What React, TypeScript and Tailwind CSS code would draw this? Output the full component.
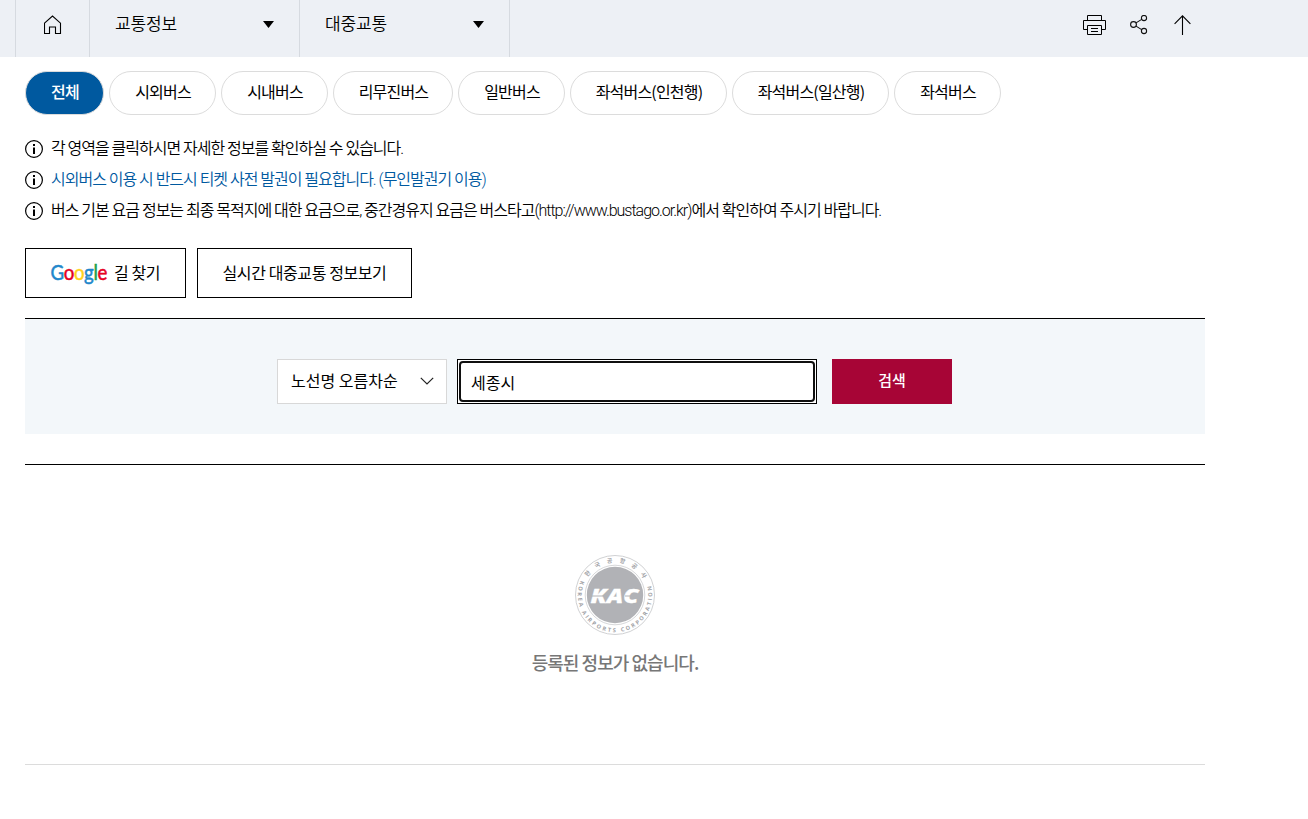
import { ChangeEvent, useState } from "react";

const busTypes = [
  { label: "전체", width: "w-[79px]" },
  { label: "시외버스", width: "w-[107px]" },
  { label: "시내버스", width: "w-[107px]" },
  { label: "리무진버스", width: "w-[120px]" },
  { label: "일반버스", width: "w-[107px]" },
  { label: "좌석버스(인천행)", width: "w-[157px]" },
  { label: "좌석버스(일산행)", width: "w-[157px]" },
  { label: "좌석버스", width: "w-[107px]" },
];

const notices = [
  { text: "각 영역을 클릭하시면 자세한 정보를 확인하실 수 있습니다.", color: "text-black" },
  { text: "시외버스 이용 시 반드시 티켓 사전 발권이 필요합니다. (무인발권기 이용)", color: "text-[#00599f]" },
  {
    text: "버스 기본 요금 정보는 최종 목적지에 대한 요금으로, 중간경유지 요금은 버스타고(http://www.bustago.or.kr)에서 확인하여 주시기 바랍니다.",
    color: "text-black",
  },
];

const HomeIcon = () => (
  <svg width="18" height="19" viewBox="0 0 18 19" fill="none" stroke="#000" strokeWidth="1.1">
    <path d="M.5 8.200 8.500 1l8 7.200V18.500H11.500V12H5.500v6.500H.5z" />
  </svg>
);

const PrintIcon = () => (
  <svg width="23" height="21" viewBox="0 0 23 21" fill="none" stroke="#000">
    <path d="M4.500 5.500v-5h14v5M4.500 14.500h-4v-9h22v9h-4" />
    <path d="M4.500 10.500h14v9h-14zM8 13.500h7M8 16.500h7" />
  </svg>
);

const ShareIcon = () => (
  <svg width="18" height="20" viewBox="0 0 18 20" fill="none" stroke="#111" strokeWidth="1.1">
    <circle cx="3.500" cy="9.500" r="2.900" />
    <circle cx="14" cy="3" r="2.600" />
    <circle cx="14" cy="16" r="2.600" />
    <path d="m6 7.900 5.700-3.500M6 11.100l5.700 3.500" />
  </svg>
);

const ArrowUpIcon = () => (
  <svg width="18" height="20" viewBox="0 0 18 20" fill="none" stroke="#000" strokeWidth="1.1">
    <path d="M8.500 20V.8M.6 8.800l7.900-8 7.900 8" />
  </svg>
);

const InfoIcon = () => (
  <svg width="18" height="18" viewBox="0 0 18 18" fill="none" className="shrink-0">
    <circle cx="9" cy="9" r="8.400" stroke="#000" strokeWidth="1.2" />
    <path d="M8 4h2v2H8zM8 7.500h2V14H8z" fill="#000" />
  </svg>
);

const GoogleLogo = () => (
  <svg
    width="57"
    height="32"
    viewBox="0 0 57 32"
    className="overflow-visible [font-family:Lato,sans-serif]"
    fontSize="20.500"
    fontWeight="400"
    aria-label="Google"
  >
    <text x="-.5" y="23" textLength="56.500" lengthAdjust="spacingAndGlyphs" strokeWidth=".5">
      <tspan fill="#2187cb" stroke="#2187cb">G</tspan>
      <tspan fill="#e60023" stroke="#e60023">o</tspan>
      <tspan fill="#ffd21c" stroke="#ffd21c">o</tspan>
      <tspan fill="#2187cb" stroke="#2187cb">g</tspan>
      <tspan fill="#17a04a" stroke="#17a04a">l</tspan>
      <tspan fill="#e60023" stroke="#e60023">e</tspan>
    </text>
  </svg>
);

const KacEmblem = () => (
  <svg width="80" height="80" viewBox="0 0 80 80" fill="none">
    <defs>
      <path id="emblem-top" d="M7.500 40a32.500 32.500 0 0 1 65 0" />
      <path id="emblem-bottom" d="M5.800 25.500A37.200 37.200 0 1 0 74.200 25.500" />
    </defs>
    <circle cx="40" cy="40" r="39.500" stroke="#c4c5c8" strokeWidth=".8" />
    <circle cx="40" cy="40" r="29.800" stroke="#c4c5c8" strokeWidth=".7" />
    <circle cx="40" cy="40" r="28.200" fill="#b1b2b6" />
    <text fill="#a2a3a7" fontSize="6" fontWeight="700" textAnchor="middle" letterSpacing="6.600">
      <textPath href="#emblem-top" startOffset="54%">한국공항공사</textPath>
    </text>
    <text fill="#a2a3a7" fontSize="5.600" fontWeight="700" className="[font-family:Open_Sans,sans-serif]">
      <textPath href="#emblem-bottom" startOffset="0" textLength="141">KOREA AIRPORTS CORPORATION</textPath>
    </text>
    <text
      x="15.500"
      y="47.800"
      fill="#fff"
      stroke="#fff"
      strokeWidth=".3"
      fontSize="20"
      fontWeight="800"
      fontStyle="italic"
      textLength="48"
      lengthAdjust="spacingAndGlyphs"
      className="[font-family:Open_Sans,sans-serif]"
    >
      KAC
    </text>
    <path d="M12 41h18M50 41h14" stroke="#b1b2b6" strokeWidth="1" />
  </svg>
);

const BreadcrumbMenu = ({ label }: { label: string }) => (
  <button className="flex h-full w-[210px] items-start justify-between border-r border-[#d6dae0] px-[25px] pt-[11px] text-left">
    <span className="text-[17px] leading-[24px] font-[350] tracking-[-0.1px]">{label}</span>
    <svg width="11" height="7" viewBox="0 0 11 7" className="mt-[10px]">
      <path d="M0 0h11L5.500 7z" />
    </svg>
  </button>
);

export default function App() {
  const [selected, setSelected] = useState("전체");
  const [keyword, setKeyword] = useState("세종시");

  return (
    <div className="h-[819px] overflow-hidden bg-white font-[Noto_Sans_CJK_KR,sans-serif] text-black">
      <header className="flex h-[57px] justify-between bg-[#edf0f5] pr-[116px] pl-[15px]">
        <nav className="flex">
          <button className="flex w-[75px] justify-center border-x border-[#d6dae0] pt-[15px]" aria-label="홈">
            <HomeIcon />
          </button>
          <BreadcrumbMenu label="교통정보" />
          <BreadcrumbMenu label="대중교통" />
        </nav>
        <div className="flex items-start pt-[15px]">
          <button aria-label="인쇄"><PrintIcon /></button>
          <button className="ml-[24px]" aria-label="공유"><ShareIcon /></button>
          <button className="ml-[26px]" aria-label="위로"><ArrowUpIcon /></button>
        </div>
      </header>

      <main className="ml-[25px] w-[1180px]">
        {/* Bus type filter */}
        <div className="flex gap-[5px] pt-[14px]">
          {busTypes.map((type) => (
            <button
              key={type.label}
              onClick={() => setSelected(type.label)}
              className={`h-[44px] shrink-0 rounded-full border border-[#dcdcdc] pb-[5px] pl-px text-[16px] whitespace-nowrap ${type.width} ${
                selected === type.label ? "bg-[#00599f] font-medium text-white" : "bg-white font-normal"
              }`}
            >
              <span className="tracking-[-0.8px]">{type.label}</span>
            </button>
          ))}
        </div>

        {/* Notices */}
        <ul className="mt-[18px]">
          {notices.map((notice) => (
            <li key={notice.text} className="flex h-[31px] items-center gap-2">
              <InfoIcon />
              <span
                className={`font-[Roboto,Noto_Sans_CJK_KR,sans-serif] text-[16px] font-[350] tracking-[-1.01px] whitespace-nowrap ${notice.color}`}
              >
                {notice.text}
              </span>
            </li>
          ))}
        </ul>

        {/* External links */}
        <div className="mt-[22px] flex gap-[11px]">
          <button className="flex h-[50px] w-[161px] items-center border border-black pl-[25px] text-[16px] tracking-[-0.4px]">
            <GoogleLogo />
            <span className="ml-[6px] pb-[3px] whitespace-nowrap">길 찾기</span>
          </button>
          <button className="h-[50px] w-[215px] border border-black pb-[3px] text-[16px] tracking-[-0.4px] whitespace-nowrap">
            실시간 대중교통 정보보기
          </button>
        </div>

        {/* Search */}
        <form
          onSubmit={(e) => e.preventDefault()}
          className="mt-5 flex h-[116px] items-start border-t border-black bg-[#f3f7fa] pt-10 pl-[252px]"
        >
          <button type="button" className="flex h-[45px] w-[170px] items-center justify-between border border-[#d8d8d8] bg-white pr-[12px] pl-[13px]">
            <span className="pb-[4px] text-[16px] whitespace-nowrap">노선명 오름차순</span>
            <svg width="14" height="8" viewBox="0 0 14 8" fill="none" stroke="#222" strokeWidth="1.2" className="-mt-px">
              <path d="m.8.800 6.200 6.200 6.200-6.200" />
            </svg>
          </button>
          <div className="ml-[10px] h-[45px] w-[360px] border border-black bg-white p-px">
            <input
              value={keyword}
              onChange={(e: ChangeEvent<HTMLInputElement>) => setKeyword(e.target.value)}
              className="h-full w-full rounded-[4px] border-2 border-[#101010] bg-white px-[10px] text-[16px] outline-none"
            />
          </div>
          <button className="ml-[15px] h-[45px] w-[120px] bg-[#a70536] pb-[2px] text-[15px] font-medium text-white">검색</button>
        </form>

        {/* Empty result */}
        <section className="mt-[30px] flex h-[301px] flex-col items-center border-t border-b border-t-black border-b-[#dcdcdc] pt-[90px]">
          <KacEmblem />
          <p className="mt-[14px] text-[18px] leading-[26px] font-medium tracking-[-0.95px] whitespace-nowrap text-[#777]">
            등록된 정보가 없습니다.
          </p>
        </section>
      </main>
    </div>
  );
}
